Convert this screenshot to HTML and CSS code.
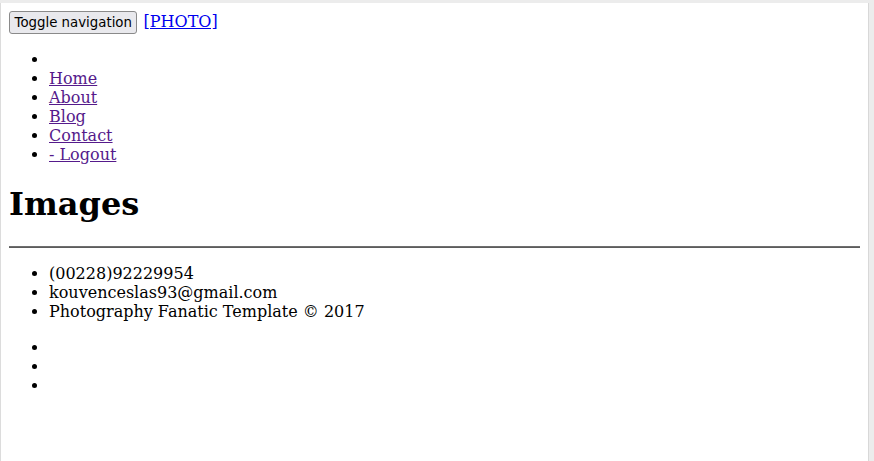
FILE: index.html
```html
<!DOCTYPE html>
<html>
<head>
<meta charset="utf-8">
<title>Images</title>
<link rel="stylesheet" href="styles.css">
</head>
<body>
<nav class="navbar">
  <button class="toggle" type="button">Toggle navigation</button>
  <a class="brand" href="#">[PHOTO]</a>
  <ul class="menu">
    <li></li>
    <li><a class="visited" href="#">Home</a></li>
    <li><a class="visited" href="#">About</a></li>
    <li><a class="visited" href="#">Blog</a></li>
    <li><a class="visited" href="#">Contact</a></li>
    <li><a class="visited" href="#">- Logout</a></li>
  </ul>
</nav>
<h1 class="title">Images</h1>
<hr class="rule">
<footer>
  <ul class="info">
    <li>(00228)92229954</li>
    <li>kouvenceslas93@gmail.com</li>
    <li>Photography Fanatic Template © 2017</li>
  </ul>
  <ul class="social">
    <li></li>
    <li></li>
    <li></li>
  </ul>
</footer>
</body>
</html>
```
FILE: styles.css
```css
html {
  background: #ececec;
  height: 100%;
}
body {
  margin: 3px 5px 0 0;
  padding: 8px;
  min-height: calc(100% - 19px);
  background: #ffffff;
  border-left: 1px solid #dcdcdc;
  border-right: 1px solid #d8d8d8;
  font-family: "DejaVu Serif", serif;
  font-size: 16px;
  color: #000;
}
.toggle {
  font-family: "DejaVu Sans", sans-serif;
  font-size: 13.333px;
  padding: 3px 4.5px;
  border: 1px solid #8a8a8a;
  border-radius: 3px;
  background: #e9e9ed;
  color: #000;
  vertical-align: baseline;
}
.brand {
  color: #0000ee;
  margin-left: 1px;
}
.visited {
  color: #551a8b;
}
.title {
  font-size: 2em;
  margin-bottom: 22.5px;
}
.rule {
  border: none;
  border-top: 1px solid #6e6e6e;
  border-bottom: 1px solid #5c5c5c;
}
.info {
  margin-bottom: 17px;
}
```
